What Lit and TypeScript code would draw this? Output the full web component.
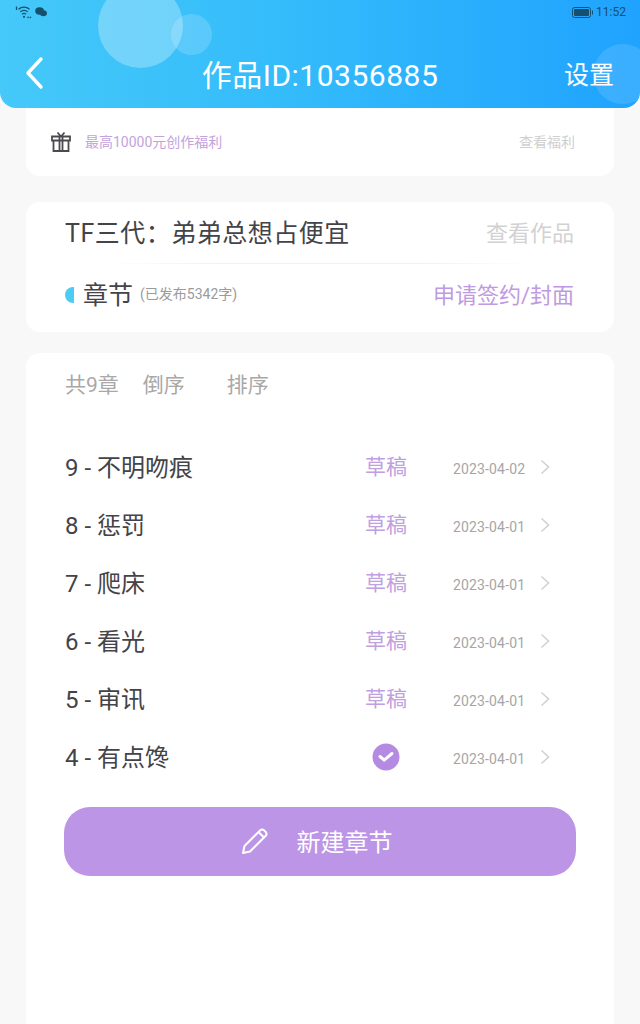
import { LitElement, css, html } from 'lit';
import { customElement } from 'lit/decorators.js';

const chapters = [
  { title: '9 - 不明吻痕', date: '2023-04-02', draft: true },
  { title: '8 - 惩罚', date: '2023-04-01', draft: true },
  { title: '7 - 爬床', date: '2023-04-01', draft: true },
  { title: '6 - 看光', date: '2023-04-01', draft: true },
  { title: '5 - 审讯', date: '2023-04-01', draft: true },
  { title: '4 - 有点馋', date: '2023-04-01', draft: false },
];

@customElement('app-root')
export class AppRoot extends LitElement {
  static styles = css`
    :host {
      display: block;
      width: 640px;
      height: 1024px;
      overflow: hidden;
      background: #f8f8f8;
      font-family: Roboto, 'Noto Sans CJK SC', sans-serif;
      color: #434348;
    }
    .header {
      position: relative;
      z-index: 1;
      height: 108px;
      box-sizing: border-box;
      overflow: hidden;
      border-radius: 0 0 16px 16px;
      background: linear-gradient(90deg, #45c9f9 0%, #36bdfa 40%, #1fa3ff 100%);
      color: #fff;
    }
    .bubble {
      position: absolute;
      border-radius: 50%;
      background: rgba(255, 255, 255, 0.28);
    }
    .b1 { left: 98px; top: -17px; width: 85px; height: 85px; }
    .b2 { left: 171px; top: 14px; width: 41px; height: 41px; background: rgba(255, 255, 255, 0.17); }
    .b3 { left: 593px; top: 44px; width: 60px; height: 60px; background: rgba(255, 255, 255, 0.12); }
    .status {
      position: relative;
      height: 24px;
      padding: 0 14px 0 15px;
      display: flex;
      align-items: center;
      justify-content: space-between;
      color: #17506f;
      font-size: 12px;
    }
    .status div { display: flex; align-items: center; gap: 3px; }
    .nav {
      position: relative;
      height: 60px;
      margin-top: 19px;
      padding: 0 26px;
      display: grid;
      grid-template-columns: 60px 1fr 60px;
      align-items: center;
      text-align: center;
    }
    .nav svg { display: block; margin-left: -1px; }
    .title { font-size: 30px; letter-spacing: 0.5px; }
    .settings { font-size: 25px; text-align: right; }
    .content {
      padding: 0 26px;
      display: flex;
      flex-direction: column;
    }
    .card {
      background: #fff;
      border-radius: 14px;
    }
    .perk {
      margin-top: -14px;
      height: 82px;
      padding: 12px 39px 0 25px;
      box-sizing: border-box;
      display: flex;
      align-items: center;
      font-size: 14px;
      color: #c3a3dd;
    }
    .perk svg { margin-right: 14px; }
    .perk .more { margin-left: auto; color: #cfcfcf; }
    .book {
      margin-top: 26px;
      height: 130px;
      padding: 0 40px 0 39px;
      box-sizing: border-box;
    }
    .book-top {
      height: 62px;
      padding-bottom: 4px;
      box-sizing: border-box;
      display: flex;
      align-items: center;
      justify-content: space-between;
      border-bottom: 1px solid;
      border-image: linear-gradient(90deg, transparent 8%, #f1f1f1 30%, #f1f1f1 70%, transparent 92%) 1;
    }
    .book-name { font-size: 25px; letter-spacing: 0.5px; }
    .book-view { font-size: 22px; color: #d2d2d2; }
    .book-bottom {
      height: 62px;
      padding-bottom: 4px;
      box-sizing: border-box;
      display: flex;
      align-items: center;
    }
    .half-dot {
      width: 9px;
      height: 16px;
      margin: 4px 9px 0 0;
      border-radius: 8px 0 0 8px;
      background: #4ccbf4;
    }
    .section { font-size: 25px; }
    .published { margin-left: 7px; font-size: 14px; color: #9b9b9b; }
    .apply { margin-left: auto; font-size: 22px; color: #bf9ae2; }
    .chapters {
      margin-top: 21px;
      height: 720px;
      padding: 0 38px 0 39px;
      box-sizing: border-box;
    }
    .tools {
      height: 64px;
      padding-bottom: 4px;
      box-sizing: border-box;
      display: flex;
      align-items: center;
      font-size: 21px;
      color: #a8a8a8;
    }
    .tools span:nth-child(2) { margin-left: 24px; }
    .tools span:nth-child(3) { margin-left: 42px; }
    .list { margin-top: 21px; }
    .row {
      height: 58px;
      display: grid;
      grid-template-columns: 291px 60px 124px auto;
      align-items: center;
    }
    .row-title { padding-bottom: 4px; font-size: 24px; }
    .row-state {
      display: flex;
      justify-content: center;
      color: #c0a0e0;
    }
    .draft { padding-bottom: 4px; font-size: 21px; }
    .row-date { padding: 4px 0 0 37px; font-size: 14px; letter-spacing: 0.15px; color: #a6a6a6; }
    .create {
      margin: 21px 0 0 -1px;
      height: 69px;
      padding: 0 8px 2px 0;
      box-sizing: border-box;
      border-radius: 26px;
      display: flex;
      align-items: center;
      justify-content: center;
      gap: 27px;
      background: #bd95e6;
      color: #fff;
      font-size: 24px;
    }
  `;

  render() {
    return html`
      <div class="header">
        <i class="bubble b1"></i><i class="bubble b2"></i><i class="bubble b3"></i>
        <div class="status">
          <div>
            <svg width="17" height="13" viewBox="0 0 17 13" fill="none" stroke="currentColor" stroke-width="1.3">
              <path d="M3.5 3.2a8.5 8.5 0 0 1 11 0M5.3 5.8a6 6 0 0 1 7.4 0M7 8.3a3 3 0 0 1 4 0M1.5 .5V4" />
              <circle cx="9" cy="10.8" r="1.1" fill="currentColor" stroke="none" />
              <circle cx="13" cy="11.4" r=".8" fill="currentColor" stroke="none" />
              <circle cx="15.4" cy="11.4" r=".8" fill="currentColor" stroke="none" />
            </svg>
            <svg width="12" height="10" viewBox="0 0 12 10" fill="currentColor">
              <ellipse cx="4.6" cy="4" rx="4.4" ry="3.7" />
              <ellipse cx="8.4" cy="6.2" rx="3.5" ry="3" />
            </svg>
          </div>
          <div>
            <svg width="21" height="11" viewBox="0 0 21 11">
              <rect x=".5" y=".5" width="18" height="10" rx="2" fill="none" stroke="currentColor" />
              <rect x="2" y="2" width="15" height="7" rx="1" fill="currentColor" />
              <rect x="20" y="3.5" width="1" height="4" fill="currentColor" />
            </svg>
            <span>11:52</span>
          </div>
        </div>
        <div class="nav">
          <svg width="20" height="34" viewBox="0 0 20 34" fill="none" stroke="#fff" stroke-width="3.4" stroke-linecap="round" stroke-linejoin="round">
            <path d="M16 3 3 17l13 14" />
          </svg>
          <div class="title">作品ID:10356885</div>
          <div class="settings">设置</div>
        </div>
      </div>
      <div class="content">
        <div class="card perk">
          <svg width="20" height="21" viewBox="0 0 20 21" fill="none" stroke="#4a4a4f" stroke-width="1.8">
            <path d="M1 5.5h18v4H1zM2.5 9.5V20h15V9.5M8.5 5.5V20M11.5 5.5V20M10 5.5 6.5 1.5M10 5.5l3.5-4" />
          </svg>
          <span>最高10000元创作福利</span>
          <span class="more">查看福利</span>
        </div>
        <div class="card book">
          <div class="book-top">
            <span class="book-name">TF三代：弟弟总想占便宜</span>
            <span class="book-view">查看作品</span>
          </div>
          <div class="book-bottom">
            <i class="half-dot"></i>
            <span class="section">章节</span>
            <span class="published">(已发布5342字)</span>
            <span class="apply">申请签约/封面</span>
          </div>
        </div>
        <div class="card chapters">
          <div class="tools"><span>共9章</span><span>倒序</span><span>排序</span></div>
          <div class="list">
            ${chapters.map(
              (c) => html`
                <div class="row">
                  <span class="row-title">${c.title}</span>
                  <span class="row-state">
                    ${c.draft
                      ? html`<span class="draft">草稿</span>`
                      : html`<svg width="28" height="28" viewBox="0 0 28 28">
                          <circle cx="14" cy="14" r="13.5" fill="#b48ae2" />
                          <path d="M8 13.5l4.2 3.6L20 10.5" fill="none" stroke="#fff" stroke-width="3" stroke-linecap="round" stroke-linejoin="round" />
                        </svg>`}
                  </span>
                  <span class="row-date">${c.date}</span>
                  <svg width="10" height="16" viewBox="0 0 10 16" fill="none" stroke="#d0d0d0" stroke-width="1.5">
                    <path d="M1.5 1.5 8.5 8l-7 6.5" />
                  </svg>
                </div>
              `,
            )}
          </div>
          <div class="create">
            <svg width="30" height="30" viewBox="0 0 30 30" fill="none" stroke="#fff" stroke-width="2" stroke-linejoin="round">
              <path d="M3 27l1.5-7L20 4.5a3 3 0 0 1 4.2 0l1.3 1.3a3 3 0 0 1 0 4.2L10 25.5zM18.5 6l5.5 5.5" />
            </svg>
            <span>新建章节</span>
          </div>
        </div>
      </div>
    `;
  }
}
